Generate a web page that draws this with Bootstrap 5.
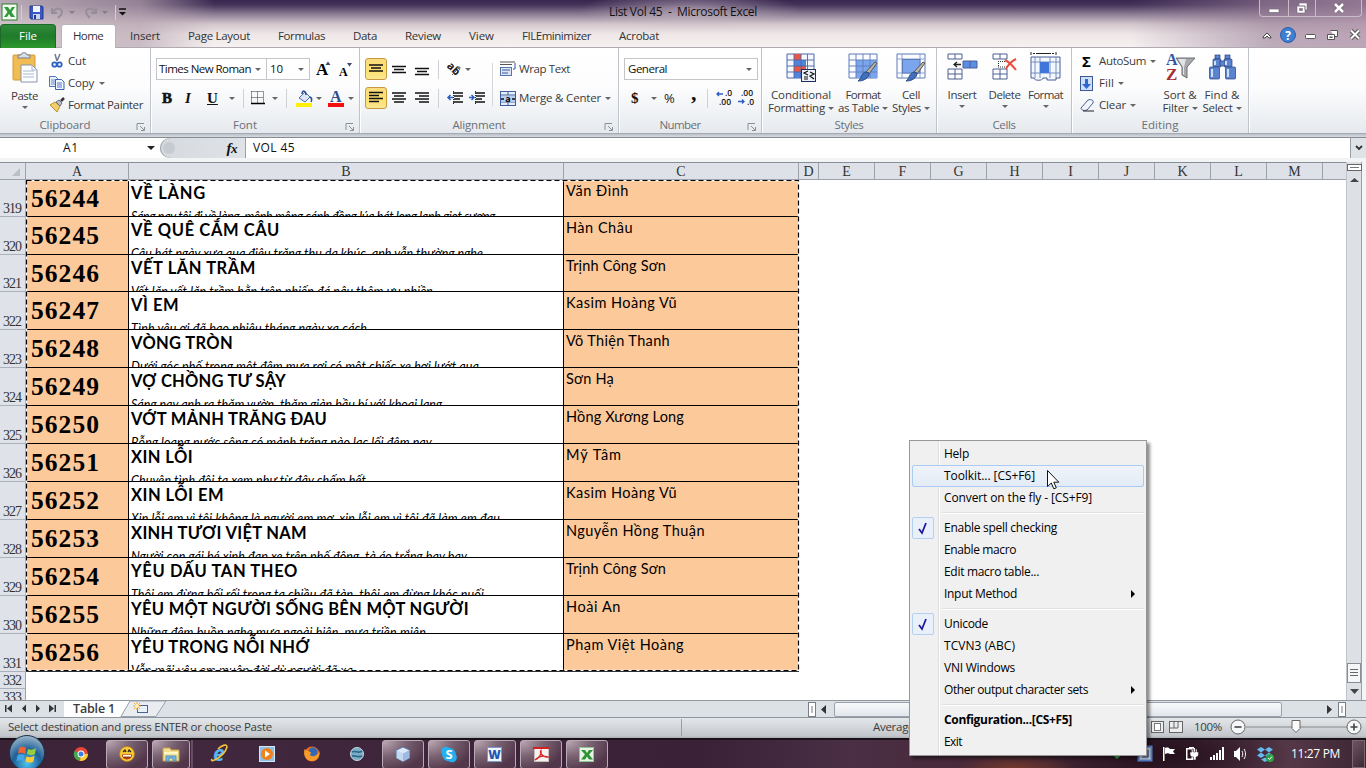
<!DOCTYPE html>
<html lang="en">
<head>
<meta charset="utf-8">
<title>List Vol 45 - Microsoft Excel</title>
<link rel="stylesheet" href="https://cdn.jsdelivr.net/npm/bootstrap@5.3.0/dist/css/bootstrap.min.css">
<style>
html,body{height:768px;overflow:hidden}
body{width:1366px;font:11.5px/14px "Open Sans","Noto Sans",sans-serif;color:#3b3b3b;background:#fff;position:relative}
svg{display:block;flex:none;overflow:visible}
[data-w]{display:inline-block;white-space:nowrap;justify-self:start}
/* title and tabs */
.chrome{height:48px;border-bottom:1px solid #b0a9b0;background:
 radial-gradient(ellipse 110px 20px at 690px 10px,rgba(205,190,200,.6),transparent),
 linear-gradient(90deg,rgba(205,192,198,.85) 0,rgba(185,166,178,.7) 140px,transparent 215px,transparent 1130px,rgba(150,125,150,.6) 1270px,rgba(170,140,165,.75) 1366px),
 linear-gradient(#38264f 0,#45335a 5px,#8b7b93 14px,#d3c6cc 24px,#eee6e7 34px,#f6f2f2 47px)}
.title-row{height:24px;display:grid;grid-template-columns:21px 8px 22px 18px 15px 18px 13px 5px 489px 1fr auto;align-items:center}
.title-row .winbtns{align-self:start;height:17px;border:1px solid #c9bcc8;border-top:0;margin-right:4px;border-radius:0 0 4px 4px;background:rgba(150,125,150,.35)}
.winbtns span{display:flex;align-items:center;justify-content:center}
.winbtns span+span{border-left:1px solid #c9bcc8}
.tab-row{height:23px;display:grid;grid-template-columns:56px 5px 69px 58px 90px 75px 52px 64px 53px 97px 642px 1fr;line-height:23px;color:#333}
.filetab{background:linear-gradient(#2f8a3a,#1f7a2b 50%,#2e9a2c);border-radius:4px 4px 0 0;color:#fff;padding-left:18px;border:1px solid #1c6a29;border-bottom:0;line-height:21px}
.hometab{width:55px;background:#fff;border:1px solid #b9b4bb;border-bottom:0;border-radius:3px 3px 0 0;padding-left:11px;height:24px;position:relative;line-height:22px}
/* ribbon */
.ribbon{height:85px;background:linear-gradient(#fff,#fdfdfe 45%,#eceff2 85%,#e5e9ee)}
.grp{border-right:1px solid #bfc4ca;height:85px;box-shadow:1px 0 #fff}
.grp .body{height:69px;overflow:hidden}
.grp .cap{height:16px;line-height:16px;color:#6a6f78;position:relative;text-align:center}
.cap svg{position:absolute;right:5px;top:6px}
.rw{display:grid;align-items:center;height:22px}
.ar{width:0;height:0;border:3px solid transparent;border-top:3px solid #666;border-bottom:0;display:inline-block;flex:none}
.vs{width:1px;height:19px;background:#cdd0d4}
.selbox{height:22px;border:1px solid #c3c5c9;background:#fff;color:#111;display:flex;align-items:center;justify-content:space-between;padding:0 5px 0 3px}
.on{width:22px;height:22px;border:1px solid #c79a3e;border-radius:3px;background:linear-gradient(#fbdc7f,#fce06f 60%,#fbe794);display:grid;place-items:center}
.big{display:flex;flex-direction:column;align-items:center;line-height:13px;white-space:nowrap}
.big svg{margin-top:4px;margin-bottom:5px}
.clip{grid-template-columns:19px 1fr}
.f1{grid-template-columns:111px 43px 6px 22px 1fr;margin-top:10px}
.f2{grid-template-columns:23px 22px 18px 14px 11px 22px 14px 10px 20px 12px 20px 1fr;margin-top:7px;padding-left:6px}
.a1{grid-template-columns:27px 23px 23px 9px 18px 1fr;width:131px;margin-top:10px}
.a2{grid-template-columns:27px 23px 23px 9px 22px 1fr;width:131px;margin-top:7px}
.a3{grid-template-columns:19px 86px 1fr}
.n2{grid-template-columns:16px 17px 23px 20px 9px 22px 1fr;margin-top:7px;padding-left:7px}
.ser{font-family:"Liberation Serif",serif;font-weight:700;color:#111}
/* formula bar */
.fbar{height:29px;background:linear-gradient(#8e96a1 0,#b9bfc8 1px,#d8dce1 4px,#d9dde2 24px,#7f858d 24px,#7f858d 25px,#f2f4f6 25px,#f2f4f6 29px);padding-top:4px;color:#111}
.fbar>div{height:21px;line-height:20px;border-top:1px solid #878c93}
.white{background:#fff}
.fxzone{background:linear-gradient(90deg,#d6dade,#dfe2e6);width:85px;border-radius:11px 0 0 11px;box-shadow:inset 1px 0 #9aa0a8}
/* grid */
.hdr,.srow{display:grid}
.hdr{grid-template-columns:26px 103px 435px 235px 20px repeat(9,56px) 1fr;height:18px;background:#dee2e8;border-top:1px solid #878e98;border-bottom:1px solid #9ba2ab;font:14px/18px "Liberation Serif",serif;color:#333}
.hdr div{border-right:1px solid #9ba2ab;text-align:center;height:16px}
.sheet{height:520px;position:relative}
.srow{grid-template-columns:26px 103px 435px 235px;width:799px}
.rn{background:#dfe3e9;border-right:1px solid #9ba2ab;border-bottom:1px solid #aab1ba;font:14px/14px "Liberation Serif",serif;color:#333;display:flex;align-items:flex-end;justify-content:flex-end;padding-right:4px;overflow:hidden}
.ca,.cb,.cc{border-bottom:1px solid #000;border-right:1px solid #000;overflow:hidden;white-space:nowrap;color:#000}
.ca,.cc{background:#fcc99b}
.ca{font:700 25.5px/37px "Liberation Serif",serif;padding-left:5px}
.cb{padding-left:2px;font-family:Lato,sans-serif}
.cb b{display:block;font-size:16.5px;line-height:20px;height:30px;padding-top:3px;overflow:visible}
.cb i{display:block;font-size:12.5px;line-height:14px}
.cc{font:14.5px/20px Lato,sans-serif;padding:1px 0 0 2px;border-right:0}
.ants{position:absolute;left:26px;top:0}
.vscroll{width:20px;background:#dde1e6;border-left:1px solid #c0c5cc;box-shadow:inset -4px 0 #f3f4f6,inset -5px 0 #9aa1aa}
/* sheet tabs and status */
.tabs{height:17px;background:#dce1e6;border-top:1px solid #8e96a0}
.status{height:21px;background:linear-gradient(#8d949c 0,#8d949c 1px,#e4e7ea 1px,#c3c7cb 90%,#a9adb2);padding-bottom:1px}
.hs{width:448px;height:15px;border:1px solid #9aa2ad;background:linear-gradient(#f8f9fb,#e2e6ec);border-radius:2px}
/* taskbar */
.task{height:30px;border-top:2px solid #1a1018;background:
 radial-gradient(ellipse 60px 16px at 1015px 30px,rgba(130,65,40,.8),transparent),
 radial-gradient(ellipse 120px 40px at 1170px 15px,rgba(30,12,22,.8),transparent),
 linear-gradient(90deg,#3a2236 0,#42283f 200px,#3a2138 700px,#4a2f45 850px,#482837 1000px,#3a1e2e 1150px,#553848 1290px,#3d2634 1366px)}
.tb{width:42px;height:29px;border:1px solid #b9a9b5;border-radius:3px;background:radial-gradient(ellipse at 0 0,#bda9b5,#7b6474 40%,#52374a 80%);display:grid;place-items:center;margin-right:4px}
/* popup menu */
.popmenu{position:absolute;left:909px;top:440px;width:238px;height:316px;background:linear-gradient(90deg,#f0f0f0 28px,#dedfdf 28px,#dedfdf 29px,#fff 29px,#fff 30px,#f0f0f0 30px);border:1px solid #979797;box-shadow:3px 3px 3px rgba(0,0,0,.45);padding:2px;font-size:12px;color:#000}
.mi{height:22px;line-height:20px;padding-left:32px;position:relative;display:flex;justify-content:space-between;align-items:center;padding-right:8px}
.sel{border:1px solid #aaccf2;border-radius:2px;background:linear-gradient(#f0f4f9,#e2ebf6);padding-left:31px}
.sep{height:8px;margin-left:29px;background:linear-gradient(transparent 3px,#e0e0e0 3px,#e0e0e0 4px,#fff 4px,#fff 5px,transparent 5px)}
.tick{position:absolute;left:0;top:0;width:22px;height:22px;border:1px solid #b5cfef;border-radius:2px;background:#eaf0f9;display:grid;place-items:center}
.cursor{position:absolute;left:1047px;top:470px}
</style>
</head>
<body>
<div class="d-flex flex-column">
<header class="chrome">
 <div class="title-row">
  <svg width="17" height="18" style="margin-left:1px" viewBox="0 0 17 18"><rect x="1" y="1" width="15" height="16" fill="#f2faf0" stroke="#2c7c35"/><path d="M3 4h4l2 3 2-3h3l-3.500 5 3.500 5h-4l-2-3-2 3H3l3.500-5z" fill="#2f9a3a"/></svg>
  <span class="vs" style="height:15px"></span>
  <svg width="15" height="15" viewBox="0 0 15 15"><path d="M1 1h12l1 1v12H2l-1-1z" fill="#3a57c4" stroke="#24388c"/><rect x="4" y="1" width="7" height="6" fill="#eef3fc"/><rect x="4" y="9" width="7" height="5" fill="#c9d4ee"/><rect x="5" y="10" width="2" height="4" fill="#24388c"/></svg>
  <svg width="14" height="13" viewBox="0 0 14 13"><path d="M1 2v5h5M2 6c3-5 9-4 9 0 0 3-2 4-4 6" fill="none" stroke="#978e9b" stroke-width="2"/></svg>
  <i class="ar" style="opacity:.6"></i>
  <svg width="14" height="13" viewBox="0 0 14 13"><path d="M12 2v5H7M11 6C8 1 2 2 2 6c0 3 2 4 4 6" fill="none" stroke="#978e9b" stroke-width="2"/></svg>
  <i class="ar" style="opacity:.6"></i>
  <span class="vs" style="height:15px"></span>
  <svg width="9" height="8" viewBox="0 0 9 8" style="margin-left:-2px"><path d="M1 1h7" stroke="#111" stroke-width="1.500"/><path d="M1 4h7L4.500 7.500z" fill="#111"/></svg>
  <span data-w="148" style="color:#111;font-size:12px">List Vol 45&nbsp; -&nbsp; Microsoft Excel</span>
  <div class="winbtns d-flex">
   <span style="width:28px"><svg width="12" height="14"><rect x="1" y="8" width="10" height="3.500" fill="#fff" stroke="#776a7c" stroke-width=".7"/></svg></span>
   <span style="width:27px"><svg width="12" height="12" viewBox="0 0 12 12"><path d="M3 1h8v7H9V4H3zM1 4h8v7H1zM3.500 6.500v2h3v-2z" fill="#fff" fill-rule="evenodd" stroke="#776a7c" stroke-width=".6"/></svg></span>
   <span style="width:46px"><svg width="12" height="10" viewBox="0 0 12 10"><path d="M2 1l8 8M10 1L2 9" stroke="#6e6074" stroke-width="4"/><path d="M2 1l8 8M10 1L2 9" stroke="#fff" stroke-width="2.600"/></svg></span>
  </div>
 </div>
 <nav class="tab-row">
  <div class="filetab"><span data-w="18">File</span></div><span></span>
  <div class="hometab"><span data-w="30">Home</span></div>
  <div><span data-w="30">Insert</span></div><div><span data-w="62">Page Layout</span></div><div><span data-w="47">Formulas</span></div><div><span data-w="24">Data</span></div><div><span data-w="36">Review</span></div><div><span data-w="25">View</span></div><div><span data-w="69">FILEminimizer</span></div><div><span data-w="40">Acrobat</span></div>
  <div class="d-flex align-items-center">
   <svg width="102" height="18" viewBox="-1 1 102 18"><path d="M1 11l4-4 4 4v1H7L5 10l-2 2H1z" fill="#fff" stroke="#444"/><circle cx="26" cy="9" r="7.500" fill="#3f7fd2" stroke="#2a5ea8"/><text x="26" y="13.500" text-anchor="middle" font-size="12" font-weight="700" fill="#fff">?</text><rect x="43.500" y="8.500" width="10" height="4" rx="1" fill="#fff" stroke="#555"/><path d="M68.500 4.500h7v6h-3M65.500 8.500h7v5h-7z" fill="#fff" stroke="#555"/><rect x="67.500" y="10.500" width="3" height="1.500" fill="#555"/><path d="M89 4.500l8 8M97 4.500l-8 8" stroke="#555" stroke-width="4"/><path d="M89 4.500l8 8M97 4.500l-8 8" stroke="#fff" stroke-width="2"/></svg>
  </div>
 </nav>
</header>

<section class="ribbon d-flex">
 <div class="grp" style="width:151px"><div class="body d-flex">
   <div class="big" style="width:49px"><svg width="28" height="32" viewBox="0 0 28 32"><rect x="2" y="3" width="22" height="25" rx="1" fill="#f2bc55" stroke="#d29a3a"/><path d="M7 6V3h3c0-3 6-3 6 0h3v3z" fill="#dadfe5" stroke="#767d87"/><path d="M10 13h11l5 5v12H10z" fill="#fdfeff" stroke="#8a93a5"/><path d="M21 13v5h5M12 19h11M12 22h11M12 25h11" fill="none" stroke="#a9b7d4"/></svg><span data-w="27">Paste</span><i class="ar" style="margin-top:4px"></i></div>
   <div class="d-flex flex-column" style="padding-top:2px">
    <div class="rw clip"><svg width="16" height="16" viewBox="0 0 16 16"><path d="M6 1l2 7M11 1L8 8" stroke="#6f7c92" stroke-width="1.500"/><circle cx="5.500" cy="11.500" r="2.200" fill="none" stroke="#2c62c4" stroke-width="1.800"/><circle cx="10.500" cy="11.500" r="2.200" fill="none" stroke="#2c62c4" stroke-width="1.800"/></svg><span><span data-w="18">Cut</span></span></div>
    <div class="rw clip"><svg width="16" height="14" viewBox="0 0 16 14"><path d="M.5.500h6l2 2v8h-8z" fill="#e7effb" stroke="#4f74b8"/><path d="M2 4h5M2 6h5M2 8h5" stroke="#6c8ecb"/><path d="M6.500 3.500h6l2.500 2.500v7.500H6.500z" fill="#f2f6fd" stroke="#3a61ab"/><path d="M8 7h5M8 9h5M8 11h5" stroke="#4f7bc9"/></svg><span><span data-w="26">Copy</span><i class="ar align-middle" style="margin-left:5px"></i></span></div>
    <div class="rw clip"><svg width="16" height="14" viewBox="0 0 16 14"><path d="M1 7l5-3 5 4-3 6z" fill="#f3cf6c" stroke="#bd9230"/><path d="M7 4l3-2 3 3-2 3z" fill="#b9bfc9" stroke="#6b7280"/><path d="M12 3l3-3" stroke="#333" stroke-width="2.500"/></svg><span><span data-w="75">Format Painter</span></span></div>
   </div></div>
   <div class="cap" style="padding-right:20px"><span data-w="51">Clipboard</span><svg width="8" height="8" viewBox="0 0 8 8"><path d="M0 7V.5h7M3 3l4 4M7.500 4v3.500H4" fill="none" stroke="#8a9099"/></svg></div></div>

 <div class="grp" style="width:209px"><div class="body" style="padding-left:5px">
   <div class="rw f1"><div class="selbox" style="padding-left:2px"><span data-w="92">Times New Roman</span><i class="ar"></i></div><div class="selbox" style="margin-left:-1px"><span>10</span><i class="ar"></i></div><i></i>
    <svg width="17" height="18" viewBox="0 0 17 18"><text x="0" y="15" class="ser" font-size="17">A</text><path d="M9.500 5L12 1.500 14.500 5z" fill="#3b4a66"/></svg><svg width="17" height="18" viewBox="0 0 17 18"><text x="1" y="16" class="ser" font-size="12">A</text><path d="M9 3h5l-2.500 3.500z" fill="#3b4a66"/></svg></div>
   <div class="rw f2 ser" style="font-size:15px"><span style="-webkit-text-stroke:.6px">B</span><i>I</i><u>U</u><i class="ar ms-1"></i><i class="vs ms-1"></i>
    <svg width="14" height="14" viewBox="-1 0 14 14"><path d="M.5 .5h12M.5 6.500h12M.5 .5v12M6.500 .5v12M12.500 .5v12" stroke="#333" stroke-dasharray="1 1"/><path d="M0 12.500h14" stroke="#000" stroke-width="1.500"/></svg><i class="ar"></i><i class="vs"></i>
    <svg width="17" height="17" viewBox="0 0 17 17"><path d="M3 8l6-6 5 5-5 5z" fill="#dbe6f7" stroke="#4b6ea9"/><path d="M6 4c0-4 4-4 4 1M14 7c2 1 2 3 1 5" fill="none" stroke="#2a4f96" stroke-width="1.500"/><rect y="13" width="16" height="4" fill="#fff200"/></svg><i class="ar"></i>
    <svg width="17" height="17" viewBox="0 0 17 17"><text x="2" y="12" class="ser" font-size="16" style="fill:#2e4d8e">A</text><rect y="13" width="16" height="4" fill="#f80c0c"/></svg><i class="ar"></i></div></div>
   <div class="cap" style="padding-right:20px"><span data-w="24">Font</span><svg width="8" height="8" viewBox="0 0 8 8"><path d="M0 7V.5h7M3 3l4 4M7.500 4v3.500H4" fill="none" stroke="#8a9099"/></svg></div></div>

 <div class="grp" style="width:259px"><div class="body d-flex" style="padding-left:5px">
   <div>
   <div class="rw a1"><span class="on"><svg width="14" height="10"><path d="M0 1h14M2 4h10M0 7h14" stroke="#111" stroke-width="1.300"/></svg></span><svg width="14" height="10"><path d="M0 2.500h14M2 5.500h10M0 8.500h14" stroke="#111" stroke-width="1.300"/></svg><svg width="14" height="12"><path d="M0 5.500h14M2 8.500h10M0 11.500h14" stroke="#111" stroke-width="1.300"/></svg><i class="vs"></i><svg width="16" height="16" viewBox="0 0 16 16"><text x="0" y="10" font-size="11" font-weight="700" fill="#222" transform="rotate(45 5 7)">ab</text><path d="M5 14l8-8m0 0l-3 .5M13 6l-.5 3" stroke="#666" fill="none"/></svg><i class="ar"></i></div>
   <div class="rw a2"><span class="on"><svg width="14" height="14"><path d="M0 1.500h14M0 4.500h10M0 7.500h14M0 10.500h10" stroke="#111" stroke-width="1.300"/></svg></span><svg width="14" height="14"><path d="M0 2h14M2 5h10M0 8h14M2 11h10" stroke="#111" stroke-width="1.300"/></svg><svg width="14" height="14"><path d="M0 2h14M4 5h10M0 8h14M4 11h10" stroke="#111" stroke-width="1.300"/></svg><i class="vs"></i>
   <svg width="16" height="14" viewBox="0 0 16 14"><path d="M6 2h10M7 5h9M7 8h6M6 11h10" stroke="#111" stroke-width="1.300"/><path d="M6.500 0v14" stroke="#222" stroke-dasharray="1 1"/><path d="M1 6.500h5M3.500 4L1 6.500 3.500 9" stroke="#2e5ec0" stroke-width="1.500" fill="none"/></svg><svg width="16" height="14" viewBox="0 0 16 14"><path d="M6 2h10M7 5h9M7 8h6M6 11h10" stroke="#111" stroke-width="1.300"/><path d="M6.500 0v14" stroke="#222" stroke-dasharray="1 1"/><path d="M0 6.500h5M2.500 4L5 6.500 2.500 9" stroke="#2e5ec0" stroke-width="1.500" fill="none"/></svg></div></div>
   <div style="border-left:1px solid #d3d6da;margin:15px 0 12px -4px;padding-left:7px;height:43px">
    <div class="rw a3" style="margin-top:-5px"><svg width="17" height="16" viewBox="0 0 17 16"><path d="M0 1h15M0 3.500h12" stroke="#555"/><rect x=".5" y="6.500" width="11" height="8" fill="#dbe5f6" stroke="#5775ab"/><path d="M2 9h8M2 12h6M15 2v6h-2" stroke="#3d5894" fill="none"/></svg><span data-w="51">Wrap Text</span></div>
    <div class="rw a3" style="margin-top:7px"><svg width="17" height="15" viewBox="0 0 17 15"><rect x=".5" y=".5" width="15" height="14" fill="#e8effa" stroke="#3f5d9c"/><path d="M0 4h16M0 11h16M8 0v4M8 11v4" stroke="#3f5d9c"/><rect x="1" y="5" width="14" height="6" fill="#b7cdf1"/><text x="8" y="10.500" text-anchor="middle" font-size="9" font-weight="700">a</text><path d="M1 8h3M12 8h3" stroke="#111" stroke-width="1.500"/></svg><span data-w="82">Merge &amp; Center</span><i class="ar"></i></div>
   </div></div>
   <div class="cap" style="padding-right:20px"><span data-w="53">Alignment</span><svg width="8" height="8" viewBox="0 0 8 8"><path d="M0 7V.5h7M3 3l4 4M7.500 4v3.500H4" fill="none" stroke="#8a9099"/></svg></div></div>

 <div class="grp" style="width:143px"><div class="body" style="padding-left:5px">
   <div class="selbox" style="width:134px;margin-top:10px"><span data-w="39">General</span><i class="ar"></i></div>
   <div class="rw n2"><span class="ser" style="font-size:15px">$</span><i class="ar ms-1"></i><span style="font-size:13px;color:#222">%</span><span class="ser" style="font-size:22px;line-height:10px;padding-left:4px;margin-top:-10px">,</span><i class="vs"></i>
   <svg width="17" height="16" viewBox="0 0 17 16" font-size="8.500" font-weight="600" fill="#111"><text x="9" y="6">.0</text><text x="3" y="14.500">.00</text><path d="M1 4h6M3 2L1 4l2 2" stroke="#2e5ec0" stroke-width="1.300" fill="none"/></svg><svg width="17" height="16" viewBox="0 0 17 16" font-size="8.500" font-weight="600" fill="#111"><text x="3" y="6">.00</text><text x="9" y="14.500">.0</text><path d="M0 11.500h6M4 9.500l2 2-2 2" stroke="#2e5ec0" stroke-width="1.300" fill="none"/></svg></div></div>
   <div class="cap" style="padding-right:20px"><span data-w="41">Number</span><svg width="8" height="8" viewBox="0 0 8 8"><path d="M0 7V.5h7M3 3l4 4M7.500 4v3.500H4" fill="none" stroke="#8a9099"/></svg></div></div>

 <div class="grp" style="width:175px"><div class="body d-flex">
   <div class="big" style="width:76px;margin-left:1px"><svg width="30" height="31" viewBox="0 0 30 31"><path d="M1 2h27v24H1z" fill="#f4f7fd" stroke="#4a66a8"/><rect x="8" y="2" width="7" height="6" fill="#ea5443"/><rect x="8" y="8" width="12" height="6" fill="#4f83dd"/><rect x="8" y="14" width="12" height="6" fill="#ea5443"/><rect x="8" y="20" width="7" height="6" fill="#4f83dd"/><path d="M1 8h27M1 14h27M1 20h27M8 2v24M15 2v24M21.500 2v24" stroke="#4a66a8" stroke-width=".9"/><rect x="15.500" y="17.500" width="14" height="12" fill="#eef2fa" stroke="#1d2f56"/><path d="M22 19l-4 2 4 2M18 25h4M18 27h4M24 20l4 2-4 2 4 3" fill="none" stroke="#111" stroke-width="1.200"/></svg><span data-w="60">Conditional</span><span><span data-w="57">Formatting</span> <i class="ar align-middle"></i></span></div>
   <div class="big" style="width:48px;"><svg width="30" height="31" viewBox="0 0 30 31"><path d="M1 2h28v24H1z" fill="#fbfcff" stroke="#5f7ab8"/><rect x="8" y="8" width="21" height="18" fill="#7ba6ee"/><path d="M1 8h28M1 14h28M1 20h28M8 2v24M15 2v24M22 2v24" stroke="#5f7ab8" stroke-width=".9"/><path d="M29 11l-8 11-3-2 9-10z" fill="#b8b5a9" stroke="#555"/><path d="M21 21c0 5-5 8-11 8 4-3 3-8 8-9z" fill="#416fb9" stroke="#2b4b86"/></svg><span data-w="35">Format</span><span><span data-w="41">as Table</span> <i class="ar align-middle"></i></span></div>
   <div class="big" style="width:48px"><svg width="30" height="31" viewBox="0 0 30 31"><path d="M1 2h28v24H1z" fill="#fbfcff" stroke="#5f7ab8"/><path d="M1 7h28M1 21h28M6 2v24M24 2v24" stroke="#8299cc" stroke-width=".9"/><rect x="6.500" y="7.500" width="17.500" height="13.500" fill="#7ba6ee" stroke="#5f7ab8"/><path d="M29 11l-8 11-3-2 9-10z" fill="#b8b5a9" stroke="#555"/><path d="M21 21c0 5-5 8-11 8 4-3 3-8 8-9z" fill="#416fb9" stroke="#2b4b86"/></svg><span data-w="18">Cell</span><span><span data-w="29">Styles</span> <i class="ar align-middle"></i></span></div></div>
   <div class="cap"><span data-w="29">Styles</span></div></div>

 <div class="grp" style="width:135px"><div class="body d-flex">
   <div class="big" style="width:50px"><svg width="31" height="31" viewBox="0 0 31 31"><g fill="#fff" stroke="#4a5f93"><path d="M1 2h14v5H1zM1 17h14v10H1z"/><path d="M8 2v5M8 17v10M1 22h14"/><path d="M16 9h14v7H16z" fill="#5b8fe6"/><path d="M23 9v7"/></g><path d="M7 12.500h7M10 10l-3 2.500 3 2.500" fill="none" stroke="#222" stroke-width="1.300"/></svg><span data-w="29">Insert</span><i class="ar" style="margin-top:4px"></i></div>
   <div class="big" style="width:35px"><svg width="26" height="31" viewBox="0 0 26 31"><g fill="#fff" stroke="#4a5f93"><path d="M1 2h14v5H1zM1 17h14v10H1z"/><path d="M8 2v5M8 17v10M1 22h14"/></g><path d="M6 9.500h9M6 15h9M6.500 9v6" stroke="#333" stroke-dasharray="1 1"/><path d="M13 8c4 2 7 5 11 10M24 7c-4 2-8 6-10 10" fill="none" stroke="#ea4e3c" stroke-width="2"/></svg><span data-w="32">Delete</span><i class="ar" style="margin-top:4px"></i></div>
   <div class="big" style="width:47px"><svg width="31" height="31" viewBox="0 0 31 31"><path d="M1 0v3M26 0v3M3 1.500h2M6 1.500h2M19 1.500h2M22 1.500h2M8 1.500h11" stroke="#222"/><path d="M1 5h29v21h-4v2h-9v-2H13c0 3-9 3-9 0H1z" fill="#f3f7fe" stroke="#4a5f93"/><path d="M1 10h29M1 21h29M5 5v21M10 5v21M20 5v21M26 5v21" stroke="#6b84bb" stroke-width=".9"/><rect x="10" y="10" width="9" height="11" fill="#3f76dc"/></svg><span data-w="35">Format</span><i class="ar" style="margin-top:4px"></i></div></div>
   <div class="cap"><span data-w="23">Cells</span></div></div>

 <div class="grp" style="width:177px"><div class="body d-flex">
   <div class="d-flex flex-column" style="padding:2px 0 0 8px;width:87px">
    <div class="rw clip"><span style="font-size:15px;color:#000;font-weight:700;padding-left:2px">Σ</span><span><span data-w="47">AutoSum</span><i class="ar align-middle" style="margin-left:4px"></i></span></div>
    <div class="rw clip"><svg width="14" height="15" viewBox="0 0 14 15"><rect x=".5" y=".5" width="12" height="14" fill="#cfdff7" stroke="#3b5998"/><path d="M5 3h3v5h3l-4.500 5L2 8h3z" fill="#2f68d0"/></svg><span><span data-w="15">Fill</span><i class="ar align-middle" style="margin-left:4px"></i></span></div>
    <div class="rw clip"><svg width="15" height="13" viewBox="0 0 15 13"><path d="M1 9l7-8c3-1 6 0 5 3l-6 7c-3 1-6 0-6-2z" fill="#f3f6fd" stroke="#4b5f93"/><path d="M3 12h11" stroke="#222"/></svg><span><span data-w="27">Clear</span><i class="ar align-middle" style="margin-left:4px"></i></span></div>
   </div>
   <div class="big" style="width:42px"><svg width="30" height="31" viewBox="0 0 30 31"><text x="1" y="13" class="ser" font-size="16" style="fill:#2f56a8">A</text><text x="1" y="28" class="ser" font-size="17" style="fill:#a82e34">Z</text><path d="M11 6h19l-8 9v11l-5-3v-8z" fill="#a7a9ac" stroke="#6d6f72"/><path d="M13 7h8l-2 8v8l-1-1v-7z" fill="#e2e3e4"/></svg><span data-w="33">Sort &amp;</span><span><span data-w="26">Filter</span> <i class="ar align-middle"></i></span></div>
   <div class="big" style="width:42px"><svg width="29" height="31" viewBox="0 0 29 31"><g fill="#5b83cf" stroke="#27407c" stroke-width=".7"><rect x="7" y="3" width="5" height="4"/><rect x="17" y="3" width="5" height="4"/><rect x="5" y="7" width="8" height="8" rx="1"/><rect x="16" y="7" width="8" height="8" rx="1"/><rect x="12" y="9" width="5" height="5"/><rect x="1.500" y="15" width="10" height="12" rx="1"/><rect x="17.500" y="15" width="10" height="12" rx="1"/></g><path d="M4 17v8M20 17v8M7 9v4M18 9v4" stroke="#cfe0fb" stroke-width="2"/></svg><span data-w="35">Find &amp;</span><span><span data-w="30">Select</span> <i class="ar align-middle"></i></span></div></div>
   <div class="cap"><span data-w="37">Editing</span></div></div>
</section>

<section class="fbar d-flex">
 <div class="white d-flex align-items-center justify-content-end" style="width:160px"><span data-w="16" style="margin-right:68px;font-size:12px">A1</span><i class="ar" style="border-width:4px 4px 0;border-top-color:#222;margin-right:5px"></i></div>
 <div class="white"><div class="fxzone d-flex justify-content-between align-items-center h-100"><svg width="22" height="20"><circle cx="9" cy="10" r="6" fill="#c6cbd1"/></svg><span class="ser fst-italic" style="font-size:15px;padding-right:8px;letter-spacing:-.5px">f<small>x</small></span></div></div>
 <div class="white flex-fill" style="padding-left:7px;border-left:1px solid #9aa0a8"><span data-w="42" style="font-size:12px">VOL 45</span></div>
 <div class="d-grid" style="width:16px;place-items:center;background:#dfe3e8;border-left:1px solid #9aa0a8"><svg width="8" height="6"><path d="M1 1l3 3 3-3" stroke="#333" stroke-width="1.800" fill="none"/></svg></div>
</section>

<main class="d-flex">
 <div class="flex-fill">
  <div class="hdr"><div class="d-flex align-items-end justify-content-end"><svg width="15" height="14"><path d="M10 3v8H2z" fill="#b9bfc7"/></svg></div><div>A</div><div>B</div><div>C</div><div>D</div><div>E</div><div>F</div><div>G</div><div>H</div><div>I</div><div>J</div><div>K</div><div>L</div><div>M</div><div class="border-0"></div></div>
  <div class="sheet overflow-hidden" id="sheet">
   <svg class="ants" width="774" height="493"><rect x=".5" y=".5" width="772" height="490" fill="none" stroke="#fff" stroke-width="1.400"/><rect x=".5" y=".5" width="772" height="490" fill="none" stroke="#000" stroke-width="1.200" stroke-dasharray="5 3"/></svg>
  </div>
 </div>
 <div class="vscroll d-flex flex-column align-items-center justify-content-between" style="height:538px;padding:1px 5px 0 0">
  <svg width="15" height="22"><rect x=".5" y="1.500" width="14" height="6" fill="#fff" stroke="#666"/><path d="M3 4.500h9" stroke="#777"/><path d="M3 19l4.500-4 4.500 4z" fill="#444"/></svg>
  <svg width="15" height="39"><rect x=".5" y="2.500" width="13" height="19" fill="#f5f6f8" stroke="#868d96"/><path d="M3 8.500h8M3 11.500h8M3 14.500h8" stroke="#666"/><path d="M3 28h9l-4.500 5z" fill="#444"/></svg>
 </div>
</main>

<section class="tabs d-flex align-items-center">
 <svg width="64" height="15" viewBox="1 1 64 15" fill="#333"><path d="M6 4h1.500v7H6zM13 3.500v8L8 7.500zM27 3.500v8L23 7.500zM37 3.500v8l4-4zM50 3.500v8l5-4zM55.500 4H57v7h-1.500z"/></svg>
 <div class="white h-100" style="width:56px;padding-left:9px;font-weight:600;font-size:12.5px;line-height:15px"><span data-w="42">Table 1</span></div>
 <svg width="48" height="16" viewBox="0 0 48 16"><path d="M0 0l-2 4 2 12 10-16" fill="#fff"/><path d="M1 15.500L10 0h36L36 15.500z" fill="#e9edf1" stroke="#9aa3ae"/><rect x="17.500" y="4.500" width="10" height="7" fill="#eaf1fb" stroke="#4b6390"/><path d="M17 1v8M13 5h8M14 2l6 6M20 2l-6 6" stroke="#efa92e"/><circle cx="17" cy="5" r="2" fill="#fff3c0"/></svg>
 <svg width="9" height="15" style="margin-left:640px"><rect x=".5" y=".5" width="7" height="14" fill="#fff" stroke="#777e88"/><path d="M4 4v7" stroke="#777"/></svg>
 <svg width="17" height="15"><path d="M4 7.500l5-4.500v9z" fill="#333"/></svg>
 <div class="hs"></div>
 <svg width="56" height="15"><path d="M50 7.500L45 3v9z" fill="#333"/></svg>
 <svg width="9" height="15"><rect x=".5" y=".5" width="7" height="14" fill="#fff" stroke="#777e88"/><path d="M4 4v7" stroke="#777"/></svg>
</section>
<section class="status d-flex align-items-center">
 <span data-w="264" style="margin-left:8px">Select destination and press ENTER or choose Paste</span>
 <i class="vs" style="margin-left:409px;height:17px;background:#9a9fa5"></i>
 <span data-w="44" style="margin-left:191px">Average:</span>
 <svg width="36" height="14" style="margin-left:233px"><rect x="1.500" y="1.500" width="12" height="11" fill="#eee" stroke="#666"/><rect x="4.500" y="3.500" width="6" height="7" fill="#fff" stroke="#777"/><rect x="19.500" y="1.500" width="13" height="11" fill="#eee" stroke="#666"/><path d="M24 2v6M28 2v6M20 8h8" stroke="#666"/></svg>
 <span data-w="28" style="margin-left:8px">100%</span>
 <svg width="136" height="18" style="margin-left:8px"><path d="M16 9h108" stroke="#888"/><circle cx="8" cy="9" r="7" fill="#f6f7f8" stroke="#666"/><path d="M4.500 9h7" stroke="#444" stroke-width="1.600"/><path d="M62 2.500h8v8l-4 4-4-4z" fill="#fafafa" stroke="#666"/><circle cx="124" cy="9" r="7" fill="#f6f7f8" stroke="#666"/><path d="M120.500 9h7M124 5.500v7" stroke="#444" stroke-width="1.600"/></svg>
</section>

<footer class="task d-flex align-items-center">
 <svg width="60" height="30" viewBox="0 0 60 30"><defs><radialGradient id="orb" cx=".5" cy=".8" r=".8"><stop offset="0" stop-color="#4fc3ee"/><stop offset=".5" stop-color="#1d5f97"/><stop offset="1" stop-color="#9fb9cd"/></radialGradient></defs><circle cx="27" cy="14" r="17.500" fill="url(#orb)" stroke="#1c3145"/><path d="M19 9c3-2 5-1 7 0l-1 6c-2-1-4-2-7 0z" fill="#ef6330"/><path d="M28 10c3 1 5 1 8-1l-1 6c-3 2-5 1-8 0z" fill="#95cf41"/><path d="M17.500 16.500c3-2 5-1 7 0l-1 6c-2-1-4-2-7 0z" fill="#43a4e8"/><path d="M26.500 17.500c3 1 5 1 8-1l-1 6c-3 2-5 1-8 0z" fill="#fdc935"/></svg>
 <svg width="46" height="18" viewBox="0 0 46 18"><circle cx="21" cy="9" r="7" fill="#e8453a"/><path d="M21 9L14.500 6A7 7 0 0 0 20 16z" fill="#41a84b"/><path d="M21 9h7a7 7 0 0 1-8 7z" fill="#fbcd32"/><circle cx="21" cy="9" r="3.500" fill="#fff"/><circle cx="21" cy="9" r="2.500" fill="#3c7fe4"/></svg>
 <div class="tb"><svg width="16" height="16"><circle cx="8" cy="8" r="7.500" fill="#fbc934" stroke="#b98216" stroke-width=".7"/><path d="M3 8.500h10c0 6.500-10 6.500-10 0z" fill="#a63a16"/><path d="M4 9h8v1.500H4z" fill="#fff"/><path d="M4 6l2-2 1 2M9 6l1-2 2 2" fill="none" stroke="#222" stroke-width="1.200"/></svg></div>
 <div class="tb" style="width:38px;margin-right:2px"><svg width="18" height="16"><path d="M1 2h7l1 2h8v11H1z" fill="#f3df91" stroke="#c7a343"/><path d="M2 7h14" stroke="#fff6c9" stroke-width="2"/><path d="M4 15v-5h10v5h-3v-3H7v3z" fill="#74b9e4" stroke="#4f92c2"/></svg></div>
 <svg width="18" height="28"><path d="M0 0v28" stroke="#8a7684"/></svg>
 <svg width="44" height="20" viewBox="0 0 44 20"><text x="3" y="16.500" font-size="21" font-weight="700" font-style="italic" fill="#56b6f0">e</text><path d="M2 15c-3 5 12-2 15-12 0-4-6-1-9 2" fill="none" stroke="#f4c437" stroke-width="1.600"/></svg>
 <svg width="46" height="16" viewBox="1 0 46 16"><rect x="6.500" y=".5" width="15" height="15" fill="#8ebfe6" stroke="#d4e7f7"/><circle cx="14" cy="8" r="6" fill="#f0811d"/><path d="M12 4.500l5 3.500-5 3.500z" fill="#fff"/></svg>
 <svg width="46" height="18" viewBox="2 0 46 18"><circle cx="14" cy="9" r="7.500" fill="#e96d1d"/><circle cx="15" cy="7" r="4.500" fill="#3468b5"/><path d="M6.500 4c2 2 3 1 4 2l3 2c-3 1-1 4 3 3 3-1 5-3 5-6 1 8-4 11-8 11s-9-4-7-12z" fill="#f69a28"/></svg>
 <svg width="36" height="16" viewBox="0 0 36 16"><circle cx="11" cy="8" r="6.500" fill="#7eacc4" stroke="#c4d8e2"/><path d="M6 6c3-2 7 2 10-1M6 10c3-1 6 2 10 0" fill="none" stroke="#2a678b" stroke-width="1.700"/></svg>
 <div class="tb"><svg width="16" height="16"><path d="M8 1l6.500 3v8L8 15.500 1.500 12V4z" fill="#dbe8f8" stroke="#58769e"/><path d="M8 7.500l6.500-3.500v8L8 15.500z" fill="#9dbbe2"/><path d="M1.500 4L8 7.500v8L1.500 12z" fill="#c3d7f1"/></svg></div>
 <div class="tb"><svg width="16" height="17"><circle cx="5" cy="5.500" r="4.800" fill="#23b0ee"/><circle cx="11" cy="11.500" r="4.800" fill="#23b0ee"/><circle cx="8" cy="8.500" r="6.800" fill="#23b0ee"/><text x="8" y="13" text-anchor="middle" font-size="13" font-weight="700" fill="#fff">S</text></svg></div>
 <div class="tb"><svg width="16" height="17"><rect x=".5" y="1.500" width="14" height="14" fill="#f1f6fd" stroke="#7a9bd2"/><text x="7.500" y="13" text-anchor="middle" font-size="12" font-weight="800" fill="#2456b0">W</text></svg></div>
 <div class="tb"><svg width="16" height="17"><rect x="1.500" y="1.500" width="14" height="14" fill="#f6f1ef" stroke="#c9bcbc"/><path d="M0 2h16" stroke="#d32020" stroke-width="2"/><path d="M2 14C6 12 9 8 8 4.500 6 7 11 12 15 11 10 9 5 11 2 14z" fill="none" stroke="#d32424" stroke-width="1.300"/></svg></div>
 <div class="tb"><svg width="16" height="17"><rect x=".5" y="1.500" width="14" height="14" fill="#e7f5e4" stroke="#8bc78a"/><path d="M2 4h4l2 3 2-3h4l-4 4.500 4 5h-4l-2-3-2 3H2l4-5z" fill="#2d9136"/></svg></div>
 <div class="d-flex align-items-center ms-auto" style="width:253px">
  <svg width="176" height="20" viewBox="0 0 176 20"><path d="M0 9l4 4 7-6" stroke="#35b04a" stroke-width="3" fill="none"/><rect x="25.500" y="2.500" width="13" height="14" fill="#dfeafa" stroke="#5480cb" stroke-width="2"/><path d="M29 13h6V6" stroke="#274e9d" fill="none"/>
  <g fill="#fff"><path d="M50 3h1.500v14H50zM52 4c3-1 4 0 5 1h5l-2 2.500 2 2.500h-5c-1-1-3-1-5 0z"/><path d="M73 4h3V3h5v1h1v12h-9zM74.500 5.500v9h4v-9z" fill-rule="evenodd"/><path d="M77 8h2V5h1.500v3h2V5H84v3h1.500v2c0 2-1 3-2.500 3v3h-2.500v-3C78 13 77 12 77 10z" stroke="#3a1e2e" stroke-width=".6"/><rect x="97" y="13" width="2" height="3"/><rect x="100" y="11" width="2" height="5"/><rect x="103" y="9" width="2" height="7"/><rect x="106" y="6" width="2" height="10"/><rect x="109" y="3" width="2" height="13"/><path d="M121 7h2l4-4v14l-4-4h-2z"/></g><path d="M129 7c1 2 1 4 0 6M131 5c2 3 2 7 0 10" fill="none" stroke="#fff"/><path d="M148 3l4 2.500-4 3-4-3zM156 3l4 2.500-4 3-4-3zM148 14l4-2.500-4-3-4 3zM156 14l4-2.500-4-3-4 3zM152 18l4-2.500-4-2-4 2z" fill="#64b9f1"/><circle cx="157" cy="14" r="4" fill="#2da144"/><path d="M155 14l1.500 1.500 2.500-3" stroke="#fff" fill="none"/></svg>
  <span data-w="49" class="text-white" style="font-size:12px;margin-left:2px">11:27 PM</span>
  <div style="width:13px;height:28px;margin-left:12px;border:1px solid #7c6671;background:linear-gradient(135deg,#6c5560,#3d2833)"></div>
 </div>
</footer>
</div>

<div class="popmenu">
 <div class="mi"><span data-w="25">Help</span></div>
 <div class="mi sel"><span data-w="91">Toolkit... [CS+F6]</span></div>
 <div class="mi"><span data-w="148">Convert on the fly - [CS+F9]</span></div>
 <div class="sep"></div>
 <div class="mi"><span class="tick"><svg width="10" height="13"><path d="M1 7l3 4L8 1" fill="none" stroke="#1b1b9c" stroke-width="1.800"/></svg></span><span data-w="113">Enable spell checking</span></div>
 <div class="mi"><span data-w="72">Enable macro</span></div>
 <div class="mi"><span data-w="95">Edit macro table...</span></div>
 <div class="mi"><span data-w="73">Input Method</span><svg width="5" height="8"><path d="M0 0v8l4-4z"/></svg></div>
 <div class="sep"></div>
 <div class="mi"><span class="tick"><svg width="10" height="13"><path d="M1 7l3 4L8 1" fill="none" stroke="#1b1b9c" stroke-width="1.800"/></svg></span><span data-w="44">Unicode</span></div>
 <div class="mi"><span data-w="71">TCVN3 (ABC)</span></div>
 <div class="mi"><span data-w="71">VNI Windows</span></div>
 <div class="mi"><span data-w="144">Other output character sets</span><svg width="5" height="8"><path d="M0 0v8l4-4z"/></svg></div>
 <div class="sep"></div>
 <div class="mi fw-bold"><span data-w="128">Configuration...[CS+F5]</span></div>
 <div class="mi"><span data-w="18">Exit</span></div>
</div>
<svg class="cursor" width="12" height="20"><path d="M.5.500v16l3.800-3.500 2.500 5.800 2.500-1-2.500-5.600h5z" fill="#fff" stroke="#111"/></svg>

<script src="https://cdn.jsdelivr.net/npm/bootstrap@5.3.0/dist/js/bootstrap.bundle.min.js"></script>
<script>
// code, title, title width, first line of lyrics, its width, composer, its width, row height
const songs = [
 [56244,'VỀ LÀNG',75,'Sáng nay tôi đi về làng, mênh mông cánh đồng lúa hát long lanh giọt sương',364,'Văn Đình',63,37],
 [56245,'VỀ QUÊ CẮM CÂU',149,'Câu hát ngày xưa qua điệu trăng thu dạ khúc, anh vẫn thường nghe',352,'Hàn Châu',67,38],
 [56246,'VẾT LĂN TRẦM',125,'Vết lăn vết lăn trầm hằn trên phiến đá nâu thêm ưu phiền',302,'Trịnh Công Sơn',100,37],
 [56247,'VÌ EM',48,'Tình yêu ơi đã bao nhiêu tháng ngày xa cách',236,'Kasim Hoàng Vũ',111,38],
 [56248,'VÒNG TRÒN',102,'Dưới góc phố trong một đêm mưa rơi có một chiếc xe hơi lướt qua',348,'Võ Thiện Thanh',104,38],
 [56249,'VỢ CHỒNG TƯ SẬY',155,'Sáng nay anh ra thăm vườn, thăm giàn bầu bí với khoai lang',311,'Sơn Hạ',48,38],
 [56250,'VỚT MẢNH TRĂNG ĐAU',196,'Bỗng loang nước sông có mảnh trăng nào lạc lối đêm nay',301,'Hồng Xương Long',118,38],
 [56251,'XIN LỖI',62,'Chuyện tình đôi ta xem như từ đây chấm hết',235,'Mỹ Tâm',56,38],
 [56252,'XIN LỖI EM',93,'Xin lỗi em vì tôi không là người em mơ, xin lỗi em vì tôi đã làm em đau',369,'Kasim Hoàng Vũ',111,38],
 [56253,'XINH TƯƠI VIỆT NAM',176,'Người con gái bé xinh đạp xe trên phố đông, tà áo trắng bay bay',336,'Nguyễn Hồng Thuận',139,38],
 [56254,'YÊU DẤU TAN THEO',167,'Thôi em đừng bối rối trong ta chiều đã tàn, thôi em đừng khóc nuối',353,'Trịnh Công Sơn',100,38],
 [56255,'YÊU MỘT NGƯỜI SỐNG BÊN MỘT NGƯỜI',338,'Những đêm buồn nghe mưa ngoài hiên, mưa triền miên',295,'Hoài An',55,38],
 [56256,'YÊU TRONG NỖI NHỚ',179,'Vẫn mãi yêu em muôn đời dù người đã xa',222,'Phạm Việt Hoàng',118,38]];
const rows = songs.map((s, i) => `<div class="srow" style="height:${s[7]}px"><div class="rn"><span data-w="18">${319 + i}</span></div><div class="ca"><span data-w="69">${s[0]}</span></div><div class="cb"><b><span data-w="${s[2]}">${s[1]}</span></b><i><span data-w="${s[4]}">${s[3]}</span></i></div><div class="cc"><span data-w="${s[6]}">${s[5]}</span></div></div>`).join('');
const tail = [[332,17],[333,17]].map(r => `<div class="srow" style="height:${r[1]}px"><div class="rn"><span data-w="18">${r[0]}</span></div></div>`).join('');
document.getElementById('sheet').insertAdjacentHTML('afterbegin', rows + tail);
document.querySelectorAll('[data-w]').forEach(e => {
  const n = e.textContent.length, w = e.getBoundingClientRect().width;
  e.style.letterSpacing = ((e.dataset.w - w) / n).toFixed(3) + 'px';
});
</script>
</body>
</html>
